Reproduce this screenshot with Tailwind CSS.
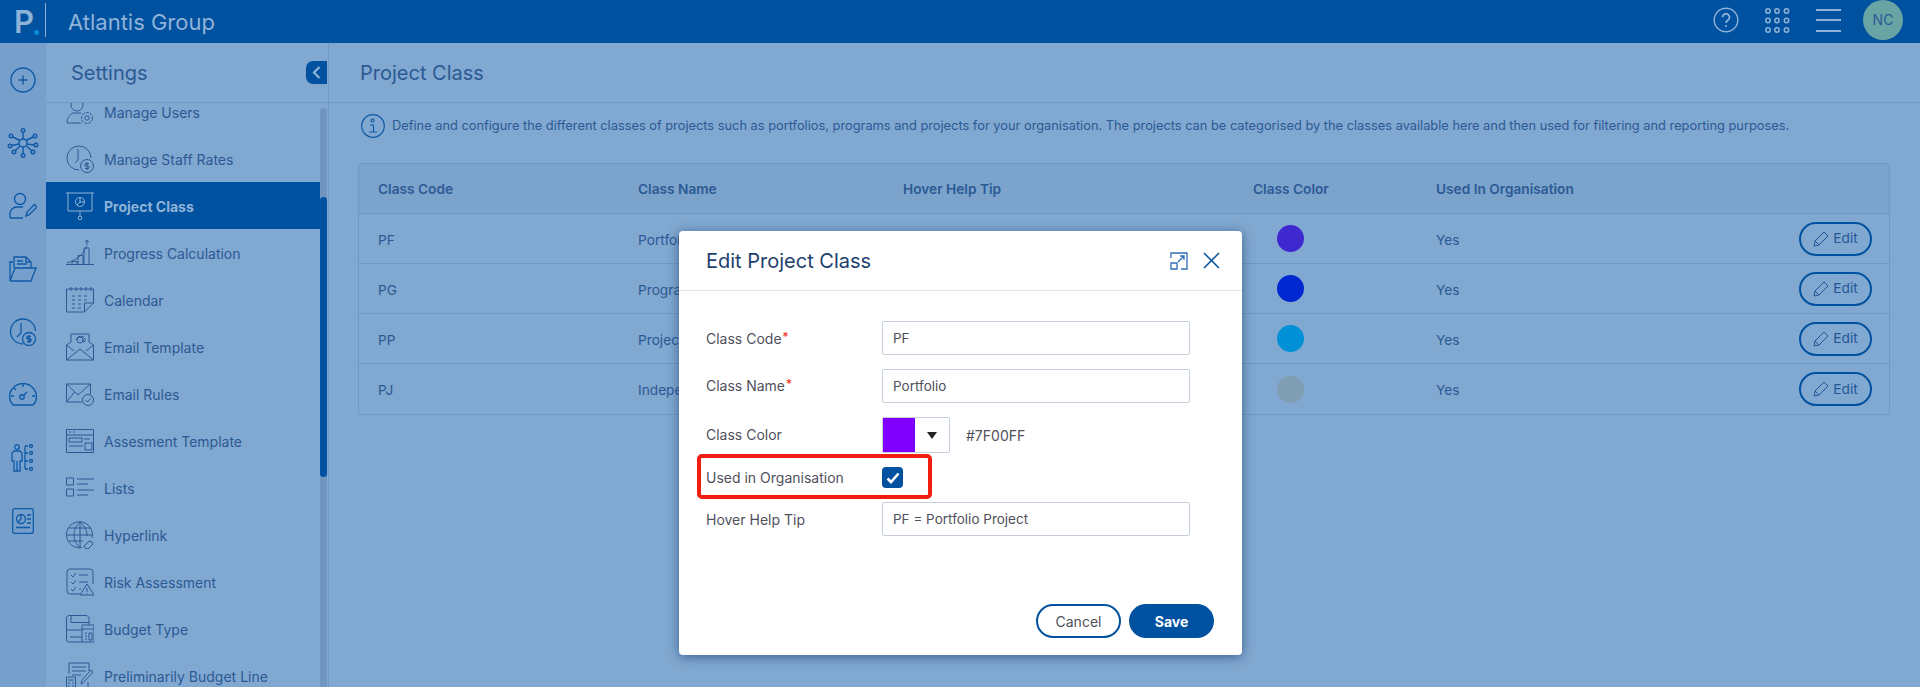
<!DOCTYPE html>
<html lang="en">
<head>
    <meta charset="UTF-8">
    <title>Project Class - Atlantis Group</title>
    <script src="https://cdn.jsdelivr.net/npm/@tailwindcss/browser@4"></script>
</head>
<body class="h-[687px] overflow-hidden bg-[#81a8d0] font-['Inter',sans-serif] text-[#2b5a94]">

    <!-- Top bar -->
    <header class="h-[43px] bg-[#00519f] flex items-center text-[#8fb3d8]">
        <div class="w-[46px] h-full flex items-center relative">
            <span class="ml-[14px] text-[31px] leading-none font-semibold">P</span>
            <span class="w-[5px] h-[5px] rounded-full bg-[#0a8bd8] mt-[21px]"></span>
            <span class="absolute left-[45px] top-[3px] h-[34px] w-px bg-[#8fb3d8]"></span>
        </div>
        <span class="ml-[22px] text-[22px] leading-none">Atlantis Group</span>
        <div class="ml-auto self-start h-[40px] flex items-center">
            <svg class="w-[26px] h-[26px]" viewBox="0 0 26 26" fill="none" stroke="#8fb3d8" stroke-width="1.4"><circle cx="13" cy="13" r="11.8"/><path d="M9.5 10.2a3.5 3.5 0 1 1 5.4 3c-1.3.8-1.9 1.4-1.9 2.8" stroke-width="1.8"/><circle cx="13" cy="19" r="1" fill="#8fb3d8" stroke="none"/></svg>
            <svg class="ml-[25px] w-[26px] h-[26px]" viewBox="0 0 26 26" fill="none" stroke="#8fb3d8" stroke-width="1.5"><circle cx="4" cy="4" r="2.2"/><circle cx="13" cy="4" r="2.2"/><circle cx="22.500" cy="4" r="2.2"/><circle cx="4" cy="13.500" r="2.2"/><circle cx="13" cy="13.500" r="2.2"/><circle cx="22.500" cy="13.500" r="2.2"/><circle cx="4" cy="23" r="2.2"/><circle cx="13" cy="23" r="2.2"/><circle cx="22.500" cy="23" r="2.2"/></svg>
            <div class="ml-[26px] w-[25px] h-[23px] flex flex-col justify-between">
                <span class="h-[2px] bg-[#8fb3d8]"></span>
                <span class="h-[2px] bg-[#8fb3d8]"></span>
                <span class="h-[2px] bg-[#8fb3d8]"></span>
            </div>
            <div class="ml-[22px] mr-[17px] w-10 h-10 rounded-full bg-[#68a4a4] flex items-center justify-center text-sm text-[#2b5a94]">NC</div>
        </div>
    </header>

    <div class="flex h-[644px]">
        <!-- Icon rail -->
        <nav class="w-[46px] shrink-0 bg-[#769fcb] pt-[5px] flex flex-col text-[#0f5aa6]">
            <div class="h-[63px] flex items-center justify-center">
                <svg class="w-[26px] h-[26px]" viewBox="0 0 26 26" fill="none" stroke="currentColor" stroke-width="1.4"><circle cx="13" cy="13" r="12"/><path d="M13 8.500v9M8.500 13h9"/></svg>
            </div>
            <div class="h-[63px] flex items-center justify-center">
                <svg class="w-[32px] h-[32px]" viewBox="0 0 32 32" fill="none" stroke="currentColor" stroke-width="1.4"><circle cx="16" cy="16" r="4"/><circle cx="16" cy="3.500" r="1.800"/><circle cx="16" cy="28.500" r="1.800"/><circle cx="4" cy="9" r="1.800"/><circle cx="28" cy="9" r="1.800"/><circle cx="3" cy="19" r="1.800"/><circle cx="29" cy="18" r="1.800"/><circle cx="7" cy="25" r="1.800"/><circle cx="26" cy="25" r="1.800"/><path d="M16 5.500V12M16 20v6.500M6 10l7 3.500M26 10l-7 3.500M5 18.500l7-1.500M27 18l-7-1M8.500 23.500l4.500-4.500M24.500 23.500L19.500 19"/></svg>
            </div>
            <div class="h-[63px] flex items-center justify-center">
                <svg class="w-[28px] h-[28px]" viewBox="0 0 28 28" fill="none" stroke="currentColor" stroke-width="1.4"><circle cx="11" cy="7" r="5.500"/><path d="M1 26v-4c0-4 3-7 7-7h6M1 26h13"/><path d="M17 24l1-4 7.500-7.500 2.500 2.500-7.500 7.500z"/></svg>
            </div>
            <div class="h-[63px] flex items-center justify-center">
                <svg class="w-[28px] h-[26px]" viewBox="0 0 28 26" fill="none" stroke="currentColor" stroke-width="1.3"><path d="M1 25V6h3M1 25h21l5-13H6L1 25"/><path d="M5 12V1h12l5 5v6M17 1v5h5M8 5h6M8 8h10"/></svg>
            </div>
            <div class="h-[63px] flex items-center justify-center">
                <svg class="w-[28px] h-[28px]" viewBox="0 0 28 28" fill="none" stroke="currentColor" stroke-width="1.300"><path d="M14 26A12.500 12.500 0 1 1 26.500 13"/><path d="M12 5v10l-4 4"/><circle cx="20" cy="21" r="6.500"/><path d="M22 18.500h-3a1.200 1.200 0 0 0 0 2.500h2a1.200 1.200 0 0 1 0 2.500h-3M20 17v8"/></svg>
            </div>
            <div class="h-[63px] flex items-center justify-center">
                <svg class="w-[28px] h-[24px]" viewBox="0 0 28 24" fill="none" stroke="currentColor" stroke-width="1.400"><path d="M4 22h20c3-3 3.500-6 3.500-8A13.500 13.500 0 0 0 .5 14c0 3 1 5 3.500 8z"/><circle cx="13" cy="14" r="2.200"/><path d="M15 12l3-3M14 1v3M2 13h3M23 13h3M5 5l2 2"/></svg>
            </div>
            <div class="h-[63px] flex items-center justify-center">
                <svg class="w-[24px] h-[28px]" viewBox="0 0 24 28" fill="none" stroke="currentColor" stroke-width="1.300"><circle cx="6" cy="3" r="2.300"/><path d="M3 7h6l2 2v8H9v10H3V17H1V9zM6 17v10M14 2v23M14 2h3M14 9h3M14 17h3M14 25h3"/><circle cx="20" cy="2" r="1.500"/><circle cx="20" cy="9" r="1.500"/><circle cx="20" cy="17" r="1.500"/><circle cx="20" cy="25" r="1.500"/></svg>
            </div>
            <div class="h-[63px] flex items-center justify-center">
                <svg class="w-[22px] h-[26px]" viewBox="0 0 22 26" fill="none" stroke="currentColor" stroke-width="1.300"><rect x=".7" y=".7" width="20.600" height="24.600" rx="2"/><circle cx="9" cy="11" r="4.500"/><path d="M9 6.500V11l-3 3M15 7h4M15 11h4M15 15h4M4 19.500h14"/></svg>
            </div>
        </nav>

        <!-- Settings sidebar -->
        <aside class="w-[282px] shrink-0 relative flex flex-col">
            <div class="h-[60px] shrink-0 border-b border-[#6f99c5] flex items-center pl-[25px] text-[20px] relative z-10 bg-[#81a8d0]">
                Settings
                <span class="absolute right-[1px] top-[18px] w-[21px] h-[23px] bg-[#00519f] rounded-l-[7px] flex items-center justify-center">
                    <svg class="w-[9px] h-[13px]" viewBox="0 0 9 13" fill="none" stroke="#8fb3d8" stroke-width="2.200"><path d="M7.500 1L2 6.500 7.500 12"/></svg>
                </span>
            </div>
            <ul class="-mt-[15px] w-[274px] text-[14px] leading-none [&_span]:pt-[2px]">
                <li class="h-[47px] flex items-center"><svg class="ml-[20px] w-[28px] h-[28px]" viewBox="0 0 28 28" fill="none" stroke="currentColor" stroke-width="1"><circle cx="11" cy="7" r="6"/><path d="M1 25c0-5 3-9 6-10h8M1 25h14"/><circle cx="21" cy="20" r="5.500" stroke-dasharray="3 1"/><circle cx="21" cy="20" r="2.200"/></svg><span class="ml-[10px]">Manage Users</span></li>
                <li class="h-[47px] flex items-center"><svg class="ml-[20px] w-[28px] h-[28px]" viewBox="0 0 28 28" fill="none" stroke="currentColor" stroke-width="1"><path d="M13 25A12 12 0 1 1 25 13"/><path d="M12 4v11l-3 3"/><circle cx="21" cy="21" r="6.500"/><path d="M23 18.500h-3a1.200 1.200 0 0 0 0 2.500h2a1.200 1.200 0 0 1 0 2.500h-3M21 17v8"/></svg><span class="ml-[10px]">Manage Staff Rates</span></li>
                <li class="h-[47px] flex items-center bg-[#00519f] text-[#8fb3d8] font-bold"><svg class="ml-[20px] w-[28px] h-[28px]" viewBox="0 0 28 28" fill="none" stroke="currentColor" stroke-width="1"><path d="M0 1h28M2 1v18h24V1M14 19v5"/><circle cx="14" cy="26" r="1.800"/><circle cx="14" cy="10" r="4.500"/><path d="M14 5.500V10h4.500M14 10l-3 3"/></svg><span class="ml-[10px]">Project Class</span></li>
                <li class="h-[47px] flex items-center"><svg class="ml-[20px] w-[28px] h-[28px]" viewBox="0 0 28 28" fill="none" stroke="currentColor" stroke-width="1"><path d="M0 25.500h28M1 24C10 21 17 16 21 7M6 25.500v-3h5v3M12 25.500v-9h5v9M18 25.500V9h5v16.500M21 6l0-5M19 3l2-2 2 2"/></svg><span class="ml-[10px]">Progress Calculation</span></li>
                <li class="h-[47px] flex items-center"><svg class="ml-[20px] w-[28px] h-[28px]" viewBox="0 0 28 28" fill="none" stroke="currentColor" stroke-width="1"><path d="M.5 3h27v14l-9 9H.5zM27.500 17h-9v9M5 1v4M10 1v4M15 1v4M20 1v4M25 1v4M6 10h3M12 10h3M18 10h3M6 14h3M12 14h3M18 14h3M6 18h3M12 18h3M6 22h3M12 22h3"/></svg><span class="ml-[10px]">Calendar</span></li>
                <li class="h-[47px] flex items-center"><svg class="ml-[20px] w-[28px] h-[28px]" viewBox="0 0 28 28" fill="none" stroke="currentColor" stroke-width="1"><path d="M.5 12v15h27V12L23 9V1H5v8zM.5 27L14 16l13.500 11M.5 12L8 18M27.500 12L20 18"/><circle cx="14" cy="7" r="3"/><path d="M17 7v1.500c1.500 1 2.500-.5 2-2.500-1-3.500-8-4-9 1"/></svg><span class="ml-[10px]">Email Template</span></li>
                <li class="h-[47px] flex items-center"><svg class="ml-[20px] w-[28px] h-[28px]" viewBox="0 0 28 28" fill="none" stroke="currentColor" stroke-width="1"><path d="M16 22H.5V4h24v10M.5 4L12 15 24.500 4M.5 22l8-10"/><circle cx="22" cy="20" r="5.500"/><path d="M19.500 20l2 2 3-3.500"/></svg><span class="ml-[10px]">Email Rules</span></li>
                <li class="h-[47px] flex items-center"><svg class="ml-[20px] w-[28px] h-[28px]" viewBox="0 0 28 28" fill="none" stroke="currentColor" stroke-width="1"><path d="M.5 2.500h27v23H.5zM.5 8h27M3 5h2M7 5h2M3 11h13v4H3zM3 19h14M18 12h6M19 16h7v7h-7z"/></svg><span class="ml-[10px]">Assesment Template</span></li>
                <li class="h-[47px] flex items-center"><svg class="ml-[20px] w-[28px] h-[28px]" viewBox="0 0 28 28" fill="none" stroke="currentColor" stroke-width="1"><path d="M.5 4h7v7h-7zM.5 15h7v7h-7zM11 5h17M11 10h11M11 16h17M11 21h11"/></svg><span class="ml-[10px]">Lists</span></li>
                <li class="h-[47px] flex items-center"><svg class="ml-[20px] w-[28px] h-[28px]" viewBox="0 0 28 28" fill="none" stroke="currentColor" stroke-width="1"><path d="M26 17A13 13 0 1 0 16 26.500"/><path d="M14 1c-8 7-8 19 0 26M14 1c5 4 7 9 7 14M14 1v26M1 14h26M3 7h22M3 20h14"/><path d="M18 25l5-5 3 1 1 2-5 5-3-1z"/></svg><span class="ml-[10px]">Hyperlink</span></li>
                <li class="h-[47px] flex items-center"><svg class="ml-[20px] w-[28px] h-[28px]" viewBox="0 0 28 28" fill="none" stroke="currentColor" stroke-width="1"><path d="M14 26H4a3 3 0 0 1-3-3V4a3 3 0 0 1 3-3h20a3 3 0 0 1 3 3v12"/><path d="M5 7l2 2 3-4M5 14l2 2 3-4M5 21l2 2 3-4M13 7h9M13 14h9M13 21h2"/><path d="M14 27l7-11 7 11zM21 20v4M21 25v1"/></svg><span class="ml-[10px]">Risk Assessment</span></li>
                <li class="h-[47px] flex items-center"><svg class="ml-[20px] w-[28px] h-[28px]" viewBox="0 0 28 28" fill="none" stroke="currentColor" stroke-width="1"><path d="M16 27H3a2.500 2.500 0 0 1-2.500-2.500V3A2.500 2.500 0 0 1 3 .5h18l2 2v7"/><path d="M5 .5v7h18M1 15h15M4 22h12"/><path d="M16 10h12v17H16zM16 14h12M19 18h2M19 21h2M19 24h2M23 18h3v7h-3z"/></svg><span class="ml-[10px]">Budget Type</span></li>
                <li class="h-[47px] flex items-center"><svg class="ml-[20px] w-[28px] h-[28px]" viewBox="0 0 28 28" fill="none" stroke="currentColor" stroke-width="1"><path d="M3 12V1h20v8M6 5h14M6 9h14M6 13h9M22 20v7H9"/><path d="M.5 15h9v12h-9zM2 18h6M2 21h2M6 21h2M2 24h2M6 24h2"/><path d="M15 22l1-4 9-10 2 2-9 10z"/></svg><span class="ml-[10px]">Preliminarily Budget Line</span></li>
            </ul>
            <!-- Scrollbar -->
            <div class="absolute left-[274px] top-[65px] bottom-0 w-[7px] bg-[#7096c0] rounded-t-full">
                <div class="absolute left-0 right-0 top-[89px] h-[280px] bg-[#00519f] rounded-full"></div>
            </div>
        </aside>

        <!-- Main panel -->
        <main class="flex-1 border-l border-[#6f99c5] flex flex-col">
            <div class="h-[60px] shrink-0 border-b border-[#6f99c5] flex items-center pl-[31px] text-[20px]">Project Class</div>
            <div class="mt-[10px] ml-[32px] flex items-center h-[26px]">
                <svg class="w-[24px] h-[24px] shrink-0 text-[#0f5aa6]" viewBox="0 0 24 24" fill="none" stroke="currentColor" stroke-width="1.200"><circle cx="12" cy="12" r="11.300"/><circle cx="11.500" cy="6.500" r="1.500"/><path d="M9 11h3.500v7M8 18h8"/></svg>
                <p class="ml-[7px] text-[12.82px] whitespace-nowrap">Define and configure the different classes of projects such as portfolios, programs and projects for your organisation. The projects can be categorised by the classes available here and then used for filtering and reporting purposes.</p>
            </div>
            <!-- Table -->
            <div class="mt-[24px] ml-[29px] w-[1532px] border border-[#6f99c5] rounded-[4px] text-[13.7px]">
                <div class="h-[49px] pt-[2px] grid grid-cols-[260px_265px_350px_183px_1fr] items-center pl-[19px] bg-[#7ba3cc] font-semibold rounded-t-[4px]">
                    <span>Class Code</span><span>Class Name</span><span>Hover Help Tip</span><span>Class Color</span><span>Used In Organisation</span>
                </div>
                <div class="h-[50px] grid grid-cols-[260px_265px_350px_183px_1fr] items-center pl-[19px] border-t border-[#6f99c5]">
                    <span class="pt-[3px]">PF</span><span class="pt-[3px]">Portfolio</span><span></span>
                    <span class="ml-[24px] w-[27px] h-[27px] rounded-full bg-[#4028d0]"></span>
                    <div class="flex items-center justify-between pr-[17px]"><span class="pt-[3px]">Yes</span>
                        <button class="w-[73px] h-[34px] rounded-full border-2 border-[#00519f] flex items-center justify-center gap-1 text-[#1f5798]"><svg class="w-[16px] h-[16px]" viewBox="0 0 16 16" fill="none" stroke="currentColor"><path d="M1 15l1-5L11 1l4 4-9 9zM2 10l4 4"/></svg>Edit</button>
                    </div>
                </div>
                <div class="h-[50px] grid grid-cols-[260px_265px_350px_183px_1fr] items-center pl-[19px] border-t border-[#6f99c5]">
                    <span class="pt-[3px]">PG</span><span class="pt-[3px]">Program</span><span></span>
                    <span class="ml-[24px] w-[27px] h-[27px] rounded-full bg-[#0028d0]"></span>
                    <div class="flex items-center justify-between pr-[17px]"><span class="pt-[3px]">Yes</span>
                        <button class="w-[73px] h-[34px] rounded-full border-2 border-[#00519f] flex items-center justify-center gap-1 text-[#1f5798]"><svg class="w-[16px] h-[16px]" viewBox="0 0 16 16" fill="none" stroke="currentColor"><path d="M1 15l1-5L11 1l4 4-9 9zM2 10l4 4"/></svg>Edit</button>
                    </div>
                </div>
                <div class="h-[50px] grid grid-cols-[260px_265px_350px_183px_1fr] items-center pl-[19px] border-t border-[#6f99c5]">
                    <span class="pt-[3px]">PP</span><span class="pt-[3px]">Project</span><span></span>
                    <span class="ml-[24px] w-[27px] h-[27px] rounded-full bg-[#0090d8]"></span>
                    <div class="flex items-center justify-between pr-[17px]"><span class="pt-[3px]">Yes</span>
                        <button class="w-[73px] h-[34px] rounded-full border-2 border-[#00519f] flex items-center justify-center gap-1 text-[#1f5798]"><svg class="w-[16px] h-[16px]" viewBox="0 0 16 16" fill="none" stroke="currentColor"><path d="M1 15l1-5L11 1l4 4-9 9zM2 10l4 4"/></svg>Edit</button>
                    </div>
                </div>
                <div class="h-[51px] grid grid-cols-[260px_265px_350px_183px_1fr] items-center pl-[19px] border-t border-[#6f99c5]">
                    <span class="pt-[3px]">PJ</span><span class="pt-[3px]">Indepe</span><span></span>
                    <span class="ml-[24px] w-[27px] h-[27px] rounded-full bg-[#7f9db3]"></span>
                    <div class="flex items-center justify-between pr-[17px]"><span class="pt-[3px]">Yes</span>
                        <button class="w-[73px] h-[34px] rounded-full border-2 border-[#00519f] flex items-center justify-center gap-1 text-[#1f5798]"><svg class="w-[16px] h-[16px]" viewBox="0 0 16 16" fill="none" stroke="currentColor"><path d="M1 15l1-5L11 1l4 4-9 9zM2 10l4 4"/></svg>Edit</button>
                    </div>
                </div>
            </div>
        </main>
    </div>

    <!-- Edit modal -->
    <div class="absolute left-[679px] top-[231px] w-[563px] h-[424px] bg-white rounded-[4px] shadow-[0_2px_12px_rgba(0,40,90,0.55)] flex flex-col text-[14px] text-[#50505c]">
        <div class="h-[60px] shrink-0 border-b border-[#dfe3ea] flex items-center pl-[27px] pr-[22px] text-[20px] text-[#1d3f6e]">
            Edit Project Class
            <svg class="ml-auto w-[18px] h-[18px]" viewBox="0 0 18 18" fill="none" stroke="#2f6db5" stroke-width="1.300"><path d="M1 6V1h16v16h-6M1 11h6v6H1zM8 10l6-6M10 4h4v4"/></svg>
            <svg class="ml-[15px] w-[17px] h-[17px]" viewBox="0 0 17 17" fill="none" stroke="#00519f" stroke-width="1.500"><path d="M1 1l15 15M16 1L1 16"/></svg>
        </div>
        <div class="pt-[30px] pl-[27px] flex flex-col">
            <div class="h-[34px] flex items-center">
                <span class="w-[176px]">Class Code<span class="text-[#f01e0e] text-[12px] ml-[1px] align-[3px]">*</span></span>
                <input value="PF" class="w-[308px] h-[34px] border border-[#c5cedb] rounded-[2px] px-[10px] text-[13.5px]">
            </div>
            <div class="h-[34px] mt-[14px] flex items-center">
                <span class="w-[176px] -mt-[1px]">Class Name<span class="text-[#f01e0e] text-[12px] ml-[1px] align-[3px]">*</span></span>
                <input value="Portfolio" class="w-[308px] h-[34px] border border-[#c5cedb] rounded-[2px] px-[10px] text-[13.5px]">
            </div>
            <div class="h-[36px] mt-[14px] flex items-center">
                <span class="w-[176px] -mt-[2px]">Class Color</span>
                <div class="w-[68px] h-[36px] border border-[#c5cedb] rounded-[2px] flex items-center">
                    <span class="w-[32px] h-full bg-[#7f00ff]"></span>
                    <span class="ml-[12px] w-0 h-0 border-x-[5px] border-x-transparent border-t-[7px] border-t-[#222]"></span>
                </div>
                <span class="ml-[16px]">#7F00FF</span>
            </div>
            <div class="h-[49px] flex items-center">
                <span class="w-[176px]">Used in Organisation</span>
                <span class="w-[21px] h-[21px] rounded-[4px] bg-[#00519f] flex items-center justify-center">
                    <svg class="w-[14px] h-[12px]" viewBox="0 0 14 12" fill="none" stroke="#fff" stroke-width="2.600"><path d="M1.500 6.500L5 10l7.500-8.500"/></svg>
                </span>
            </div>
            <div class="h-[34px] flex items-center">
                <span class="w-[176px]">Hover Help Tip</span>
                <input value="PF = Portfolio Project" class="w-[308px] h-[34px] border border-[#c5cedb] rounded-[2px] px-[10px] text-[13.5px]">
            </div>
        </div>
        <div class="mt-auto pb-[17px] pr-[28px] flex justify-end gap-[8px] text-[14px]">
            <button class="w-[85px] h-[34px] rounded-full border-2 border-[#00519f]">Cancel</button>
            <button class="w-[85px] h-[34px] rounded-full bg-[#00519f] text-white font-bold">Save</button>
        </div>
        <!-- Red annotation box -->
        <div class="absolute left-[18px] top-[223px] w-[235px] h-[45px] border-[4px] border-[#f01e0e] rounded-[5px]"></div>
    </div>

</body>
</html>
